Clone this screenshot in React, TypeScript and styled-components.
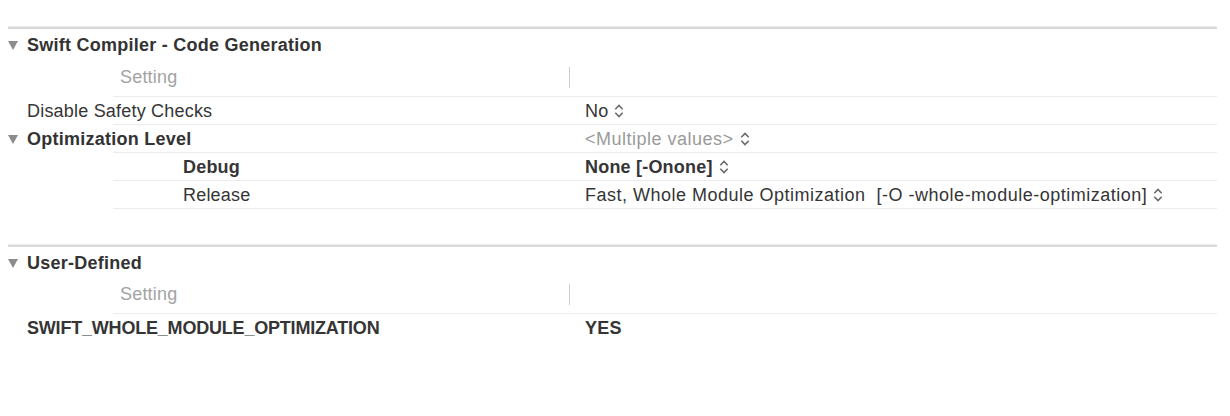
import styled, { createGlobalStyle } from 'styled-components'

const GlobalStyle = createGlobalStyle`
  html, body {
    margin: 0;
    padding: 0;
    background: #ffffff;
  }
  body {
    font-family: "Liberation Sans", Arial, sans-serif;
    font-size: 18px;
    letter-spacing: 0.2px;
    color: #353535;
  }
`

const Page = styled.div`
  width: 1209px;
  margin-left: 8px;
  padding-top: 26px;
`

const Divider = styled.div`
  height: 3px;
  background: linear-gradient(#ececec 0, #ececec 1px, #d9d9d9 1px, #d9d9d9 3px);
`

const Section = styled.div`
  display: flex;
  flex-direction: column;
`

const Spacer = styled.div<{ $h: number }>`
  height: ${p => p.$h}px;
`

const Header = styled.div`
  height: 32px;
  display: flex;
  align-items: center;
  gap: 9px;
  font-weight: bold;
  letter-spacing: 0.25px;
  color: #333;
`

const Row = styled.div<{ $h?: number; $plain?: boolean }>`
  height: ${p => p.$h ?? 28}px;
  display: flex;
  align-items: center;
  background-image: ${p => (p.$plain ? 'none' : 'linear-gradient(#ebebeb, #ebebeb)')};
  background-size: calc(100% - 105px) 1px;
  background-position: right bottom;
  background-repeat: no-repeat;
`

const Name = styled.div<{ $indent: number; $bold?: boolean; $tight?: boolean }>`
  width: 577px;
  flex: none;
  box-sizing: border-box;
  padding-left: ${p => p.$indent}px;
  font-weight: ${p => (p.$bold ? 'bold' : 'normal')};
  letter-spacing: ${p => (p.$tight ? '-0.2px' : 'inherit')};
  white-space: nowrap;
`

const ColumnTitle = styled.div`
  width: 577px;
  flex: none;
  display: flex;
  align-items: center;
  color: #a3a3a3;
  margin-top: -4px;
`

const ColumnLabel = styled.span`
  padding-left: 112px;
  flex: 1;
`

const ColumnRule = styled.span`
  width: 1px;
  height: 21px;
  background: #cfcfcf;
  margin-right: 15px;
`

const Value = styled.div<{ $muted?: boolean; $bold?: boolean; $wide?: boolean }>`
  display: flex;
  align-items: center;
  gap: 6px;
  white-space: pre;
  color: ${p => (p.$muted ? '#9a9a9a' : '#353535')};
  font-weight: ${p => (p.$bold ? 'bold' : 'normal')};
  letter-spacing: ${p => (p.$wide ? '0.5px' : 'inherit')};
`

const Disclosure = () => (
  <svg width="10" height="9" viewBox="0 0 10 9">
    <polygon points="0,0 10,0 5,9" fill="#8c8c8c" />
  </svg>
)

const Stepper = () => (
  <svg width="10" height="14" viewBox="0 0 10 14">
    <polyline points="1.3,5.2 5,1.5 8.7,5.2" fill="none" stroke="#6a6a6a" strokeWidth="1.6" />
    <polyline points="1.3,8.8 5,12.5 8.7,8.8" fill="none" stroke="#6a6a6a" strokeWidth="1.6" />
  </svg>
)

const ColumnHeader = ({ h }: { h: number }) => (
  <Row $h={h}>
    <ColumnTitle>
      <ColumnLabel>Setting</ColumnLabel>
      <ColumnRule />
    </ColumnTitle>
  </Row>
)

const App = () => {
  return <>
    <GlobalStyle />
    <Page>
      <Divider />
      <Section>
        <Header><Disclosure />Swift Compiler - Code Generation</Header>
        <ColumnHeader h={36} />
        <Row>
          <Name $indent={19}>Disable Safety Checks</Name>
          <Value>No<Stepper /></Value>
        </Row>
        <Row>
          <Name $indent={0} $bold><Header as="span">
            <Disclosure />Optimization Level
          </Header></Name>
          <Value $muted $wide>{'<Multiple values>'}<Stepper /></Value>
        </Row>
        <Row>
          <Name $indent={175} $bold>Debug</Name>
          <Value $bold>None [-Onone]<Stepper /></Value>
        </Row>
        <Row>
          <Name $indent={175}>Release</Name>
          <Value $wide>{'Fast, Whole Module Optimization  [-O -whole-module-optimization]'}<Stepper /></Value>
        </Row>
      </Section>
      <Spacer $h={35} />
      <Divider />
      <Section>
        <Header><Disclosure />User-Defined</Header>
        <ColumnHeader h={35} />
        <Row $h={28} $plain>
          <Name $indent={19} $bold $tight>SWIFT_WHOLE_MODULE_OPTIMIZATION</Name>
          <Value $bold>YES</Value>
        </Row>
      </Section>
    </Page>
  </>
}

export default App
